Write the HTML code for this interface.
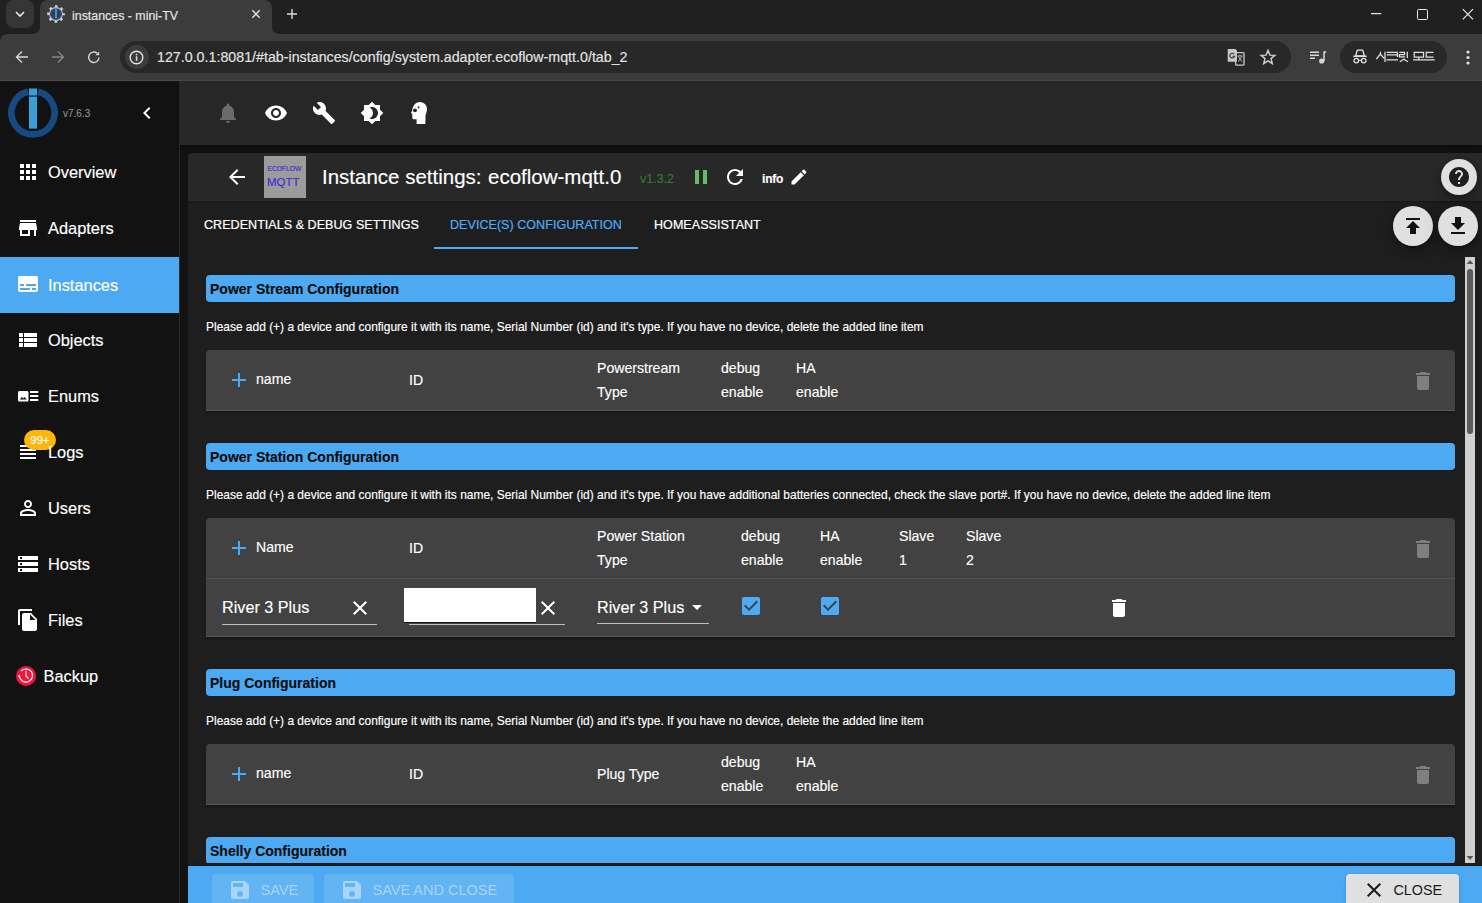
<!DOCTYPE html>
<html><head><meta charset="utf-8">
<style>
*{box-sizing:border-box;margin:0;padding:0}
html,body{width:1482px;height:903px;overflow:hidden;background:#202020;font-family:"Liberation Sans",sans-serif;color:#fff}
.a{position:absolute}
svg{display:block;position:absolute}
.tx{position:absolute;white-space:nowrap;line-height:1;-webkit-text-stroke:0.15px currentColor}
/* browser chrome */
#tabstrip{position:absolute;left:0;top:0;width:1482px;height:34px;background:#202020}
#toolbar{position:absolute;left:0;top:34px;width:1482px;height:47px;background:#3c3c3c;border-bottom:1px solid #4a4a4a;border-top-left-radius:8px}
#sidebar{position:absolute;left:0;top:81px;width:180px;height:822px;background:#121212;border-right:1px solid #2b2b2b}
#appbar{position:absolute;left:180px;top:81px;width:1302px;height:64px;background:#272727;z-index:1;box-shadow:0 2px 4px -1px rgba(0,0,0,.2),0 4px 5px 0 rgba(0,0,0,.14)}
#main{position:absolute;left:180px;top:145px;width:1302px;height:758px;background:#121212}
.nav{position:absolute;left:0;width:179px;height:56px}
.nav .t{position:absolute;left:48px;top:0;line-height:56px;font-size:16.4px;color:#fff;-webkit-text-stroke:0.15px #fff}
</style></head><body>
<!-- ===== TAB STRIP ===== -->
<div id="tabstrip">
  <div class="a" style="left:6px;top:0;width:28px;height:28px;border-radius:8px;background:#363636"></div>
  <svg style="left:14px;top:9px" width="12" height="10" viewBox="0 0 12 10"><path d="M2 3 L6 7 L10 3" stroke="#e8e8e8" stroke-width="1.6" fill="none"/></svg>
  <!-- active tab -->
  <div class="a" style="left:40px;top:0;width:232px;height:34px;background:#3c3c3c;border-radius:8px 8px 0 0"></div>
  <svg style="left:32px;top:26px" width="8" height="8" viewBox="0 0 8 8"><path d="M0 8 Q8 8 8 0 L8 8Z" fill="#3c3c3c"/></svg>
  <svg style="left:272px;top:26px" width="8" height="8" viewBox="0 0 8 8"><path d="M8 8 Q0 8 0 0 L0 8Z" fill="#3c3c3c"/></svg>
  <svg style="left:47px;top:5px" width="18" height="18" viewBox="0 0 18 18">
    <circle cx="9" cy="9" r="7.6" fill="none" stroke="#d0d0d0" stroke-width="2.4" stroke-dasharray="2.6 3.37" stroke-dashoffset="1.3"/>
    <circle cx="9" cy="9" r="6.9" fill="#d0d0d0"/>
    <circle cx="9" cy="9" r="5.2" fill="#3c3c3c" stroke="#1b4f8c" stroke-width="1.7"/>
    <rect x="8.1" y="2.6" width="1.8" height="10.6" fill="#3a9fd8"/>
  </svg>
  <div class="tx" style="left:72px;top:9.5px;font-size:12.4px;color:#e6e6e6">instances - mini-TV</div>
  <svg style="left:250px;top:8px" width="12" height="12" viewBox="0 0 12 12"><path d="M2.3 2.3 L9.7 9.7 M9.7 2.3 L2.3 9.7" stroke="#e0e0e0" stroke-width="1.5"/></svg>
  <svg style="left:285px;top:7px" width="14" height="14" viewBox="0 0 14 14"><path d="M7 2 V12 M2 7 H12" stroke="#dcdcdc" stroke-width="1.4"/></svg>
  <!-- window controls -->
  <svg style="left:1371px;top:13px" width="12" height="2" viewBox="0 0 12 2"><rect x="0" y="0" width="10.3" height="1.2" fill="#e8e8e8"/></svg>
  <div class="a" style="left:1416.5px;top:8.5px;width:11px;height:11px;border:1.2px solid #e8e8e8;border-radius:1.5px"></div>
  <svg style="left:1461px;top:8px" width="13" height="13" viewBox="0 0 13 13"><path d="M1.8 1.2 L12 11.4 M12 1.2 L1.8 11.4" stroke="#e8e8e8" stroke-width="1.2"/></svg>
</div>
<!-- ===== TOOLBAR ===== -->
<div id="toolbar">
  <svg style="left:14px;top:15px" width="16" height="16" viewBox="0 0 16 16"><path d="M14 8 H2.5 M8 2.5 L2.5 8 L8 13.5" stroke="#d8d8d8" stroke-width="1.4" fill="none"/></svg>
  <svg style="left:50px;top:15px" width="16" height="16" viewBox="0 0 16 16"><path d="M2 8 H13.5 M8 2.5 L13.5 8 L8 13.5" stroke="#858585" stroke-width="1.4" fill="none"/></svg>
  <svg style="left:86px;top:15px" width="16" height="16" viewBox="0 0 16 16"><path d="M13 8.5 A5.2 5.2 0 1 1 11.2 4.3" stroke="#d8d8d8" stroke-width="1.4" fill="none"/><path d="M13.2 2.5 V6.3 H9.4Z" fill="#d8d8d8"/></svg>
  <div class="a" style="left:120px;top:7px;width:1171px;height:32px;border-radius:16px;background:#282828"></div>
  <div class="a" style="left:124.5px;top:11px;width:24px;height:24px;border-radius:12px;background:#3c3c3c"></div>
  <svg style="left:129px;top:15.5px" width="15" height="15" viewBox="0 0 15 15"><circle cx="7.5" cy="7.5" r="6.3" stroke="#e3e3e3" stroke-width="1.4" fill="none"/><rect x="6.8" y="6.3" width="1.5" height="4.5" fill="#e3e3e3"/><rect x="6.8" y="3.8" width="1.5" height="1.5" fill="#e3e3e3"/></svg>
  <div class="tx" style="left:157px;top:16px;font-size:14.26px;color:#e3e3e3">127.0.0.1:8081/#tab-instances/config/system.adapter.ecoflow-mqtt.0/tab_2</div>
  <!-- translate icon -->
  <svg style="left:1225px;top:12px" width="22" height="22" viewBox="1225 46 22 22">
    <rect x="1235.6" y="52.6" width="8.4" height="12.6" rx="0.8" fill="#282828" stroke="#c8c8c8" stroke-width="1.3"/>
    <path d="M1228.6 48.9 H1235.3 L1237 50.6 V61.8 H1228.6 Q1227.7 61.8 1227.7 60.9 V49.8 Q1227.7 48.9 1228.6 48.9Z" fill="#c8c8c8"/>
    <path d="M1234.2 54.2 A2.4 2.4 0 1 0 1234.6 56.2 H1232.4" stroke="#3a3a3a" stroke-width="1.1" fill="none"/>
    <path d="M1237.5 56 H1242.5 M1240 55 V56 M1238.5 56.5 Q1240 60.5 1242.3 61.5 M1241.6 56.5 Q1240.5 60 1238 61.6" stroke="#c8c8c8" stroke-width="0.9" fill="none"/>
  </svg>
  <svg style="left:1259px;top:14px" width="18" height="18" viewBox="0 0 18 18"><path d="M9 2.3 L10.9 7.1 L15.9 7.4 L12 10.6 L13.3 15.6 L9 12.8 L4.7 15.6 L6 10.6 L2.1 7.4 L7.1 7.1Z" stroke="#d0d0d0" stroke-width="1.4" fill="none" stroke-linejoin="miter"/></svg>
  <!-- media icon -->
  <svg style="left:1309px;top:15px" width="18" height="16" viewBox="0 0 18 16"><path d="M1 3.3 H10 M1 6.3 H10 M1 9.3 H6" stroke="#d8d8d8" stroke-width="1.5"/><path d="M15 2.6 V12" stroke="#d8d8d8" stroke-width="1.5"/><path d="M15 3 H17.2" stroke="#d8d8d8" stroke-width="1.5"/><circle cx="12.7" cy="12" r="2.6" fill="#d8d8d8"/></svg>
  <div class="a" style="left:1340px;top:7px;width:107px;height:32px;border-radius:16px;background:#282828"></div>
  <svg style="left:1350px;top:12px" width="90" height="22" viewBox="1350 46 90 22" fill="none" stroke="#e0e0e0">
    <path d="M1357.3 50.2 H1362.7 L1364.4 56 H1355.6Z" stroke-width="1.3" stroke-linejoin="round"/>
    <path d="M1353.2 56.3 H1366.8" stroke-width="1.5"/>
    <circle cx="1356.3" cy="60.6" r="2.3" stroke-width="1.3"/><circle cx="1363.7" cy="60.6" r="2.3" stroke-width="1.3"/>
    <path d="M1358.6 60.3 H1361.4" stroke-width="1"/>
    <g stroke-width="1.25">
    <path d="M1380.4 51.8 V54 L1376.3 59.2 M1380.4 54 L1384 58.4 M1385 51.8 V62"/>
    <path d="M1386.8 52.3 H1397.4 V57 M1386.8 54.8 H1397.4 M1386.4 59.8 H1398"/>
    <path d="M1399.4 52.3 H1404.5 V54.5 H1399.4 V56.8 H1405 M1407.3 51.8 V58 M1403.8 58.4 V59.2 L1399.8 61.8 M1403.8 59.2 L1407.9 61.8"/>
    <path d="M1414.2 52.3 H1423.5 V57.1 H1414.2Z M1418.8 57.1 V59.8 M1413.1 59.8 H1425"/>
    <path d="M1433.5 52.3 H1426.2 V57.1 H1433.6 M1425 59.8 H1434.7"/>
    </g>
  </svg>
  <svg style="left:1465px;top:15px" width="6" height="17" viewBox="0 0 6 17"><circle cx="3" cy="3" r="1.6" fill="#e3e3e3"/><circle cx="3" cy="8.5" r="1.6" fill="#e3e3e3"/><circle cx="3" cy="14" r="1.6" fill="#e3e3e3"/></svg>
</div>
<!-- ===== SIDEBAR ===== -->
<div id="sidebar">
  <svg style="left:8px;top:7px" width="50" height="51" viewBox="0 0 50 51">
    <path d="M20 3.8 A21.6 21.6 0 1 0 30 3.8" stroke="#164a80" stroke-width="6.6" fill="none"/>
    <rect x="21" y="0.5" width="8" height="7" fill="#3a9fd8"/>
    <rect x="21" y="8.6" width="8" height="32" fill="#3a9fd8"/>
  </svg>
  <div class="tx" style="left:63px;top:27.5px;font-size:10px;color:#8c8c8c">v7.6.3</div>
  <svg style="left:135px;top:20px" width="24" height="24" viewBox="0 0 24 24"><path fill="#fff" d="M15.41 7.41L14 6l-6 6 6 6 1.41-1.41L10.83 12z"/></svg>

  <div class="nav" style="top:63px"><svg style="left:16px;top:16px" width="24" height="24" viewBox="0 0 24 24"><path fill="#fff" d="M4 8h4V4H4v4zm6 12h4v-4h-4v4zm-6 0h4v-4H4v4zm0-6h4v-4H4v4zm6 0h4v-4h-4v4zm6-10v4h4V4h-4zm-6 4h4V4h-4v4zm6 6h4v-4h-4v4zm0 6h4v-4h-4v4z"/></svg><div class="t">Overview</div></div>
  <div class="nav" style="top:119px"><svg style="left:16px;top:16px" width="24" height="24" viewBox="0 0 24 24"><path fill="#fff" d="M20 4H4v2h16V4zm1 10v-2l-1-5H4l-1 5v2h1v6h10v-6h4v6h2v-6h1zm-9 4H6v-4h6v4z"/></svg><div class="t">Adapters</div></div>
  <div class="nav" style="top:176px;background:#4daaf2"><svg style="left:16px;top:15px" width="24" height="24" viewBox="0 0 24 24"><path fill="#fff" d="M20 4H4c-1.1 0-2 .9-2 2v12c0 1.1.9 2 2 2h16c1.1 0 2-.9 2-2V6c0-1.1-.9-2-2-2zM4 12h4v2H4v-2zm10 6H4v-2h10v2zm6 0h-4v-2h4v2zm0-4H10v-2h10v2z"/></svg><div class="t">Instances</div></div>
  <div class="nav" style="top:231px"><svg style="left:15px;top:16px" width="24" height="24" viewBox="0 0 24 24"><path fill="#fff" d="M4 14h4v-4H4v4zm0 5h4v-4H4v4zM4 9h4V5H4v4zm5 5h13v-4H9v4zm0 5h13v-4H9v4zM9 5v4h13V5H9z"/></svg><div class="t">Objects</div></div>
  <div class="nav" style="top:287px"><svg style="left:17px;top:22px" width="23" height="12" viewBox="0 0 23 12"><path fill="#fff" d="M2.6 1h7.3c.9 0 1.6.7 1.6 1.6v7.3c0 .9-.7 1.6-1.6 1.6H2.6c-.9 0-1.6-.7-1.6-1.6V2.6C1 1.7 1.7 1 2.6 1z"/><path fill="#121212" d="M2.8 9.6l2.1-2.5 1.4 1.5 1.3-1.6 2.1 2.6z"/><rect x="13" y="1" width="8.3" height="2" fill="#fff"/><rect x="13" y="5" width="8.3" height="2" fill="#fff"/><rect x="13" y="9" width="8.3" height="2" fill="#fff"/></svg><div class="t">Enums</div></div>
  <div class="nav" style="top:343px"><svg style="left:18px;top:21px" width="18" height="14" viewBox="0 0 18 14"><rect x="2" y="0" width="16" height="2" fill="#fff"/><rect x="2" y="4" width="16" height="2" fill="#fff"/><rect x="2" y="8" width="16" height="2" fill="#fff"/><rect x="2" y="12" width="16" height="2" fill="#fff"/></svg>
    <div class="a" style="left:24px;top:6px;width:32px;height:20px;border-radius:10px;background:#fbb70b"></div>
    <div class="tx" style="left:24px;top:10.5px;width:32px;text-align:center;font-size:11.5px;color:#fff">99+</div>
    <div class="t">Logs</div></div>
  <div class="nav" style="top:399px"><svg style="left:16px;top:16px" width="24" height="24" viewBox="0 0 24 24"><path fill="#fff" d="M12 5.9c1.16 0 2.1.94 2.1 2.1s-.94 2.1-2.1 2.1S9.9 9.16 9.9 8s.94-2.1 2.1-2.1m0 9c2.97 0 6.1 1.46 6.1 2.1v1.1H5.9V17c0-.64 3.13-2.1 6.1-2.1M12 4C9.79 4 8 5.79 8 8s1.79 4 4 4 4-1.79 4-4-1.79-4-4-4zm0 9c-2.67 0-8 1.34-8 4v3h16v-3c0-2.66-5.33-4-8-4z"/></svg><div class="t">Users</div></div>
  <div class="nav" style="top:455px"><svg style="left:16px;top:16px" width="24" height="24" viewBox="0 0 24 24"><path fill="#fff" d="M2 20h20v-4H2v4zm2-3h2v2H4v-2zM2 4v4h20V4H2zm4 3H4V5h2v2zm-4 7h20v-4H2v4zm2-3h2v2H4v-2z"/></svg><div class="t">Hosts</div></div>
  <div class="nav" style="top:511px"><svg style="left:16px;top:16px" width="24" height="24" viewBox="0 0 24 24"><path fill="#fff" d="M16 1H4c-1.1 0-2 .9-2 2v14h2V3h12V1zm-1 4l6 6v10c0 1.1-.9 2-2 2H7.99C6.89 23 6 22.1 6 21l.01-14c0-1.1.89-2 1.99-2h7zm-1 7h5.5L14 6.5V12z"/></svg><div class="t">Files</div></div>
  <div class="nav" style="top:567px">
    <div class="a" style="left:16px;top:18px;width:20px;height:20px;border-radius:50%;background:#f0173f"></div>
    <svg style="left:16px;top:18px" width="20" height="20" viewBox="0 0 20 20"><path d="M3.6 11.2 A6.6 6.6 0 1 0 5.2 5" stroke="#fff" stroke-width="1.1" fill="none"/><circle cx="3.2" cy="10" r="1" fill="#fff"/><path d="M10 4.8 V10 L12.6 12.6" stroke="#fff" stroke-width="1.1" fill="none"/></svg>
    <div class="t" style="left:43.5px">Backup</div></div>
</div>
<!-- ===== APP BAR ===== -->
<div id="appbar">
  <svg style="left:36px;top:20px" width="24" height="24" viewBox="0 0 24 24"><path fill="#6b6b6b" d="M12 22c1.1 0 2-.9 2-2h-4c0 1.1.89 2 2 2zm6-6v-5c0-3.07-1.64-5.64-4.5-6.32V4c0-.83-.67-1.5-1.5-1.5s-1.5.67-1.5 1.5v.68C7.63 5.360 6 7.92 6 11v5l-2 2v1h16v-1l-2-2z"/></svg>
  <svg style="left:84px;top:20px" width="24" height="24" viewBox="0 0 24 24"><path fill="#fff" d="M12 4.5C7 4.5 2.73 7.61 1 12c1.73 4.39 6 7.5 11 7.5s9.27-3.11 11-7.5c-1.73-4.39-6-7.5-11-7.5zM12 17c-2.76 0-5-2.24-5-5s2.24-5 5-5 5 2.24 5 5-2.24 5-5 5zm0-8c-1.66 0-3 1.34-3 3s1.34 3 3 3 3-1.34 3-3-1.34-3-3-3z"/></svg>
  <svg style="left:132px;top:20px" width="24" height="24" viewBox="0 0 24 24"><path fill="#fff" d="M22.7 19l-9.1-9.1c.9-2.3.4-5-1.5-6.9-2-2-5-2.4-7.4-1.3L9 6 6 9 1.600 4.7C.4 7.1.9 10.1 2.9 12.1c1.9 1.9 4.6 2.4 6.9 1.5l9.1 9.1c.4.4 1 .4 1.4 0l2.3-2.3c.5-.4.5-1.1.1-1.4z"/></svg>
  <svg style="left:180px;top:20px" width="24" height="24" viewBox="0 0 24 24"><path fill="#fff" d="M20 8.69V4h-4.69L12 .69 8.69 4H4v4.69L.69 12 4 15.31V20h4.69L12 23.31 15.31 20H20v-4.69L23.31 12 20 8.69zM12 18c-.89 0-1.74-.2-2.5-.55C11.560 16.5 13 14.42 13 12s-1.44-4.5-3.5-5.45C10.26 6.2 11.11 6 12 6c3.31 0 6 2.69 6 6s-2.690 6-6 6z"/></svg>
  <svg style="left:224px;top:17px" width="30" height="30" viewBox="0 0 30 30"><path fill="#fff" d="M15.6 4 C19.8 4 23 7 23 11 C23 13.6 22 15.5 21.5 17.3 L21.4 25.9 H12.6 V21.3 H10 C9 21.3 8.3 20.4 8.3 19.5 V16 L7 15 L8.3 12.6 C8.5 7.8 11.6 4 15.6 4Z"/><ellipse cx="11" cy="12.3" rx="2" ry="1.9" fill="#272727"/><path d="M14.6 7.6 L15.2 9 L16.3 9.3 L15.2 9.7 L14.6 11 L14 9.7 L13.2 9.3 L14 9Z" fill="#3a3a3a"/></svg>
</div>
<!-- ===== MAIN ===== -->
<div id="main"></div>
<div id="card" class="a" style="left:188px;top:153px;width:1294px;height:750px;background:#1e1e1e;border-radius:4px 0 0 0;overflow:hidden"></div>
<div class="a" style="left:188px;top:153px;width:1294px;height:48px;background:#282828;border-radius:4px 0 0 0;box-shadow:0 1px 2px rgba(0,0,0,0.25)"></div>
<!-- header content (page coords) -->
<svg style="left:225px;top:165px" width="24" height="24" viewBox="0 0 24 24"><path fill="#fff" d="M20 11H7.830l5.59-5.59L12 4l-8 8 8 8 1.41-1.41L7.83 13H20v-2z"/></svg>
<div class="a" style="left:264px;top:156px;width:42px;height:42px;background:#9b9b9b"></div>
<div class="tx" style="left:267.5px;top:165.5px;font-size:6.7px;color:#3d2cd2;letter-spacing:0px;-webkit-text-stroke:0.15px #3d2cd2">ECOFLOW</div>
<div class="tx" style="left:267px;top:177px;font-size:11.5px;color:#3d2cd2">MQTT</div>
<div class="tx" style="left:322px;top:167px;font-size:20.5px;color:#fff">Instance settings:</div><div class="tx" style="left:488px;top:167px;font-size:20.5px;color:#fff">ecoflow-mqtt.0</div>
<div class="tx" style="left:640px;top:172.5px;font-size:12.5px;color:#2e7d32">v1.3.2</div>
<svg style="left:689px;top:165px" width="24" height="24" viewBox="0 0 24 24"><path fill="#66bb6a" d="M6 19h4V5H6v14zm8-14v14h4V5h-4z"/></svg>
<svg style="left:723px;top:165px" width="24" height="24" viewBox="0 0 24 24"><path fill="#fff" d="M17.65 6.35C16.2 4.9 14.21 4 12 4c-4.42 0-7.99 3.58-7.99 8s3.57 8 7.990 8c3.73 0 6.84-2.55 7.73-6h-2.08c-.82 2.33-3.04 4-5.65 4-3.31 0-6-2.69-6-6s2.69-6 6-6c1.66 0 3.14.69 4.22 1.78L13 11h7V4l-2.35 2.35z"/></svg>
<div class="tx" style="left:762px;top:172.5px;font-size:12px;font-weight:700;color:#fff;letter-spacing:-0.2px">info</div>
<svg style="left:788.5px;top:167px" width="20" height="20" viewBox="0 0 24 24"><path fill="#fff" d="M3 17.25V21h3.75L17.81 9.94l-3.75-3.75L3 17.25zM20.71 7.04c.39-.39.39-1.02 0-1.41l-2.34-2.34a.9959.9959 0 0 0-1.410 0l-1.83 1.83 3.75 3.75 1.83-1.83z"/></svg>
<div class="a" style="left:1441px;top:159px;width:36px;height:36px;border-radius:50%;background:#e0e0e0;box-shadow:0 3px 5px -1px rgba(0,0,0,.2),0 6px 10px 0 rgba(0,0,0,.14),0 1px 18px 0 rgba(0,0,0,.12)"></div>
<svg style="left:1447px;top:165px" width="24" height="24" viewBox="0 0 24 24"><path fill="#1e1e1e" d="M12 2C6.48 2 2 6.48 2 12s4.48 10 10 10 10-4.48 10-10S17.52 2 12 2zm1 17h-2v-2h2v2zm2.07-7.75l-.9.92C13.45 12.9 13 13.5 13 15h-2v-.5c0-1.1.45-2.1 1.17-2.83l1.24-1.26c.37-.36.59-.86.59-1.41 0-1.1-.9-2-2-2s-2 .9-2 2H8c0-2.21 1.79-4 4-4s4 1.79 4 4c0 .88-.36 1.68-.93 2.25z"/></svg>
<!-- tabs -->
<div class="tx" style="left:204px;top:218.5px;font-size:12.55px;color:#fff;letter-spacing:0.03px;-webkit-text-stroke:0.2px #fff">CREDENTIALS &amp; DEBUG SETTINGS</div>
<div class="tx" style="left:450px;top:218.5px;font-size:12.55px;color:#4dabf5;letter-spacing:0.03px;-webkit-text-stroke:0.2px #4dabf5">DEVICE(S) CONFIGURATION</div>
<div class="tx" style="left:654px;top:218.5px;font-size:12.55px;color:#fff;letter-spacing:0.03px;-webkit-text-stroke:0.2px #fff">HOMEASSISTANT</div>
<div class="a" style="left:434px;top:247px;width:204px;height:2px;background:#4dabf5"></div>
<div class="a" style="left:1392.5px;top:206px;width:40px;height:40px;border-radius:50%;background:#e0e0e0;box-shadow:0 3px 5px -1px rgba(0,0,0,.2),0 6px 10px 0 rgba(0,0,0,.14),0 1px 18px 0 rgba(0,0,0,.12)"></div>
<svg style="left:1400.5px;top:214px" width="24" height="24" viewBox="0 0 24 24"><path fill="#111" d="M5 4v2h14V4H5zm0 10h4v6h6v-6h4l-7-7-7 7z"/></svg>
<div class="a" style="left:1438px;top:206px;width:40px;height:40px;border-radius:50%;background:#e0e0e0;box-shadow:0 3px 5px -1px rgba(0,0,0,.2),0 6px 10px 0 rgba(0,0,0,.14),0 1px 18px 0 rgba(0,0,0,.12)"></div>
<svg style="left:1446px;top:214px" width="24" height="24" viewBox="0 0 24 24"><path fill="#111" d="M19 9h-4V3H9v6H5l7 7 7-7zM5 18v2h14v-2H5z"/></svg>
<!-- content -->
<div class="a" style="left:188px;top:249px;width:1277px;height:614px;overflow:hidden">
<div class="a" style="left:-188px;top:-249px;width:1482px;height:903px">
<div class="a" style="left:206px;top:275px;width:1249px;height:27px;background:#4daaf2;border-radius:4px"></div><div class="tx" style="left:210px;top:282px;font-size:14px;font-weight:700;color:#0d0d0d">Power Stream Configuration</div><div class="tx" style="left:206px;top:322px;font-size:11.96px;color:#fff">Please add (+) a device and configure it with its name, Serial Number (id) and it's type. If you have no device, delete the added line item</div><div class="a" style="left:206px;top:350px;width:1249px;height:61px;background:#424242;border-radius:4px 4px 0 0;border-bottom:1px solid #575757;box-shadow:0 2px 2px rgba(0,0,0,0.25)"></div><svg style="left:227px;top:368px" width="24" height="24" viewBox="0 0 24 24"><path fill="#4dabf5" d="M19 13h-6v6h-2v-6H5v-2h6V5h2v6h6v2z"/></svg><div class="tx" style="left:256px;top:372px;font-size:14.1px;color:#fff">name</div><div class="tx" style="left:409px;top:373px;font-size:14.1px;color:#fff">ID</div><div class="tx" style="left:597px;top:361px;font-size:14.1px;color:#fff">Powerstream</div><div class="tx" style="left:597px;top:385px;font-size:14.1px;color:#fff">Type</div><div class="tx" style="left:721px;top:361px;font-size:14.1px;color:#fff">debug</div><div class="tx" style="left:721px;top:385px;font-size:14.1px;color:#fff">enable</div><div class="tx" style="left:796px;top:361px;font-size:14.1px;color:#fff">HA</div><div class="tx" style="left:796px;top:385px;font-size:14.1px;color:#fff">enable</div><svg style="left:1411px;top:369px" width="24" height="24" viewBox="0 0 24 24"><path fill="#7f7f7f" d="M6 19c0 1.1.9 2 2 2h8c1.1 0 2-.9 2-2V7H6v12zM19 4h-3.5l-1-1h-5l-1 1H5v2h14V4z"/></svg><div class="a" style="left:206px;top:443px;width:1249px;height:27px;background:#4daaf2;border-radius:4px"></div><div class="tx" style="left:210px;top:450px;font-size:14px;font-weight:700;color:#0d0d0d">Power Station Configuration</div><div class="tx" style="left:206px;top:490px;font-size:11.96px;color:#fff">Please add (+) a device and configure it with its name, Serial Number (id) and it's type. If you have additional batteries connected, check the slave port#. If you have no device, delete the added line item</div><div class="a" style="left:206px;top:518px;width:1249px;height:119px;background:#424242;border-radius:4px 4px 0 0;border-bottom:1px solid #575757;box-shadow:0 2px 2px rgba(0,0,0,0.25)"></div><svg style="left:227px;top:536px" width="24" height="24" viewBox="0 0 24 24"><path fill="#4dabf5" d="M19 13h-6v6h-2v-6H5v-2h6V5h2v6h6v2z"/></svg><div class="tx" style="left:256px;top:540px;font-size:14.1px;color:#fff">Name</div><div class="tx" style="left:409px;top:541px;font-size:14.1px;color:#fff">ID</div><div class="tx" style="left:597px;top:529px;font-size:14.1px;color:#fff">Power Station</div><div class="tx" style="left:597px;top:553px;font-size:14.1px;color:#fff">Type</div><div class="tx" style="left:741px;top:529px;font-size:14.1px;color:#fff">debug</div><div class="tx" style="left:741px;top:553px;font-size:14.1px;color:#fff">enable</div><div class="tx" style="left:820px;top:529px;font-size:14.1px;color:#fff">HA</div><div class="tx" style="left:820px;top:553px;font-size:14.1px;color:#fff">enable</div><div class="tx" style="left:899px;top:529px;font-size:14.1px;color:#fff">Slave</div><div class="tx" style="left:899px;top:553px;font-size:14.1px;color:#fff">1</div><div class="tx" style="left:966px;top:529px;font-size:14.1px;color:#fff">Slave</div><div class="tx" style="left:966px;top:553px;font-size:14.1px;color:#fff">2</div><svg style="left:1411px;top:537px" width="24" height="24" viewBox="0 0 24 24"><path fill="#7f7f7f" d="M6 19c0 1.1.9 2 2 2h8c1.1 0 2-.9 2-2V7H6v12zM19 4h-3.5l-1-1h-5l-1 1H5v2h14V4z"/></svg><div class="a" style="left:206px;top:578px;width:1249px;height:1px;background:#515151"></div><div class="tx" style="left:222px;top:599px;font-size:16.2px;color:#fff">River 3 Plus</div><div class="a" style="left:222px;top:623.5px;width:155px;height:1.2px;background:#bdbdbd"></div><svg style="left:348px;top:596px" width="24" height="24" viewBox="0 0 24 24"><path fill="#fff" d="M19 6.41L17.59 5 12 10.59 6.41 5 5 6.41 10.59 12 5 17.59 6.41 19 12 13.41 17.59 19 19 17.59 13.41 12z"/></svg><div class="a" style="left:404px;top:588px;width:132px;height:34px;background:#fff;box-shadow:0 1px 0 #151515"></div><div class="a" style="left:409px;top:623.5px;width:156px;height:1.2px;background:#bdbdbd"></div><svg style="left:536px;top:596px" width="24" height="24" viewBox="0 0 24 24"><path fill="#fff" d="M19 6.41L17.59 5 12 10.59 6.41 5 5 6.41 10.59 12 5 17.59 6.41 19 12 13.41 17.59 19 19 17.59 13.41 12z"/></svg><div class="tx" style="left:597px;top:599px;font-size:16.2px;color:#fff">River 3 Plus</div><svg style="left:685px;top:595px" width="24" height="24" viewBox="0 0 24 24"><path fill="#fff" d="M7 10l5 5 5-5z"/></svg><div class="a" style="left:597px;top:623px;width:112px;height:1.2px;background:#bdbdbd"></div><div class="a" style="left:744px;top:599px;width:14px;height:14px;background:#424242"></div><svg style="left:739px;top:594px" width="24" height="24" viewBox="0 0 24 24"><path fill="#4dabf5" d="M19 3H5c-1.11 0-2 .9-2 2v14c0 1.1.89 2 2 2h14c1.11 0 2-.9 2-2V5c0-1.1-.89-2-2-2zm-9 14l-5-5 1.41-1.41L10 14.17l7.59-7.59L19 8l-9 9z"/></svg><div class="a" style="left:823px;top:599px;width:14px;height:14px;background:#424242"></div><svg style="left:818px;top:594px" width="24" height="24" viewBox="0 0 24 24"><path fill="#4dabf5" d="M19 3H5c-1.11 0-2 .9-2 2v14c0 1.1.89 2 2 2h14c1.11 0 2-.9 2-2V5c0-1.1-.89-2-2-2zm-9 14l-5-5 1.41-1.41L10 14.17l7.59-7.59L19 8l-9 9z"/></svg><svg style="left:1107px;top:596px" width="24" height="24" viewBox="0 0 24 24"><path fill="#fff" d="M6 19c0 1.1.9 2 2 2h8c1.1 0 2-.9 2-2V7H6v12zM19 4h-3.5l-1-1h-5l-1 1H5v2h14V4z"/></svg><div class="a" style="left:206px;top:669px;width:1249px;height:27px;background:#4daaf2;border-radius:4px"></div><div class="tx" style="left:210px;top:676px;font-size:14px;font-weight:700;color:#0d0d0d">Plug Configuration</div><div class="tx" style="left:206px;top:716px;font-size:11.96px;color:#fff">Please add (+) a device and configure it with its name, Serial Number (id) and it's type. If you have no device, delete the added line item</div><div class="a" style="left:206px;top:744px;width:1249px;height:61px;background:#424242;border-radius:4px 4px 0 0;border-bottom:1px solid #575757;box-shadow:0 2px 2px rgba(0,0,0,0.25)"></div><svg style="left:227px;top:762px" width="24" height="24" viewBox="0 0 24 24"><path fill="#4dabf5" d="M19 13h-6v6h-2v-6H5v-2h6V5h2v6h6v2z"/></svg><div class="tx" style="left:256px;top:766px;font-size:14.1px;color:#fff">name</div><div class="tx" style="left:409px;top:767px;font-size:14.1px;color:#fff">ID</div><div class="tx" style="left:597px;top:767px;font-size:14.1px;color:#fff">Plug Type</div><div class="tx" style="left:721px;top:755px;font-size:14.1px;color:#fff">debug</div><div class="tx" style="left:721px;top:779px;font-size:14.1px;color:#fff">enable</div><div class="tx" style="left:796px;top:755px;font-size:14.1px;color:#fff">HA</div><div class="tx" style="left:796px;top:779px;font-size:14.1px;color:#fff">enable</div><svg style="left:1411px;top:763px" width="24" height="24" viewBox="0 0 24 24"><path fill="#7f7f7f" d="M6 19c0 1.1.9 2 2 2h8c1.1 0 2-.9 2-2V7H6v12zM19 4h-3.5l-1-1h-5l-1 1H5v2h14V4z"/></svg><div class="a" style="left:206px;top:837px;width:1249px;height:27px;background:#4daaf2;border-radius:4px"></div><div class="tx" style="left:210px;top:844px;font-size:14px;font-weight:700;color:#0d0d0d">Shelly Configuration</div><div class="tx" style="left:206px;top:883px;font-size:12px;color:#fff"></div></div></div>
<!-- footer -->
<div class="a" style="left:188px;top:863px;width:1294px;height:3px;background:#1a1a1a"></div><div class="a" style="left:188px;top:866px;width:1294px;height:37px;background:#4daaf2"></div><div class="a" style="left:212px;top:874px;width:102px;height:36px;border-radius:4px;background:rgba(255,255,255,0.12)"></div><svg style="left:228px;top:878px" width="24" height="24" viewBox="0 0 24 24"><path fill="rgba(255,255,255,0.45)" d="M17 3H5c-1.11 0-2 .9-2 2v14c0 1.1.89 2 2 2h14c1.1 0 2-.9 2-2V7l-4-4zm-5 16c-1.66 0-3-1.34-3-3s1.34-3 3-3 3 1.34 3 3-1.34 3-3 3zm3-10H5V5h10v4z"/></svg><div class="tx" style="left:260.5px;top:883px;font-size:14.5px;color:rgba(255,255,255,0.45);-webkit-text-stroke:0">SAVE</div><div class="a" style="left:324px;top:874px;width:190px;height:36px;border-radius:4px;background:rgba(255,255,255,0.12)"></div><svg style="left:340px;top:878px" width="24" height="24" viewBox="0 0 24 24"><path fill="rgba(255,255,255,0.45)" d="M17 3H5c-1.11 0-2 .9-2 2v14c0 1.1.89 2 2 2h14c1.1 0 2-.9 2-2V7l-4-4zm-5 16c-1.66 0-3-1.34-3-3s1.34-3 3-3 3 1.34 3 3-1.34 3-3 3zm3-10H5V5h10v4z"/></svg><div class="tx" style="left:372.5px;top:883px;font-size:14.5px;color:rgba(255,255,255,0.45);-webkit-text-stroke:0">SAVE AND CLOSE</div><div class="a" style="left:1346px;top:874px;width:113px;height:36px;border-radius:4px;background:#e0e0e0;box-shadow:0 3px 1px -2px rgba(0,0,0,.2),0 2px 2px 0 rgba(0,0,0,.14),0 1px 5px 0 rgba(0,0,0,.12)"></div><svg style="left:1362px;top:878px" width="24" height="24" viewBox="0 0 24 24"><path fill="#1a1a1a" d="M19 6.41L17.59 5 12 10.59 6.41 5 5 6.41 10.59 12 5 17.59 6.41 19 12 13.41 17.59 19 19 17.59 13.41 12z"/></svg><div class="tx" style="left:1393.5px;top:883px;font-size:14.35px;color:#1a1a1a;-webkit-text-stroke:0">CLOSE</div>
<!-- scrollbar -->
<div class="a" style="left:1465px;top:257px;width:10px;height:606px;background:#d0d0d0"></div>
<svg style="left:1466px;top:259px" width="8" height="6" viewBox="0 0 8 6"><path d="M4 1 L7.5 5 H0.5Z" fill="#5a5a5a"/></svg>
<div class="a" style="left:1467px;top:269px;width:6px;height:165px;border-radius:3px;background:#5b5b5b"></div>
<svg style="left:1466px;top:855px" width="8" height="6" viewBox="0 0 8 6"><path d="M4 5 L7.5 1 H0.5Z" fill="#5a5a5a"/></svg>
</body></html>
